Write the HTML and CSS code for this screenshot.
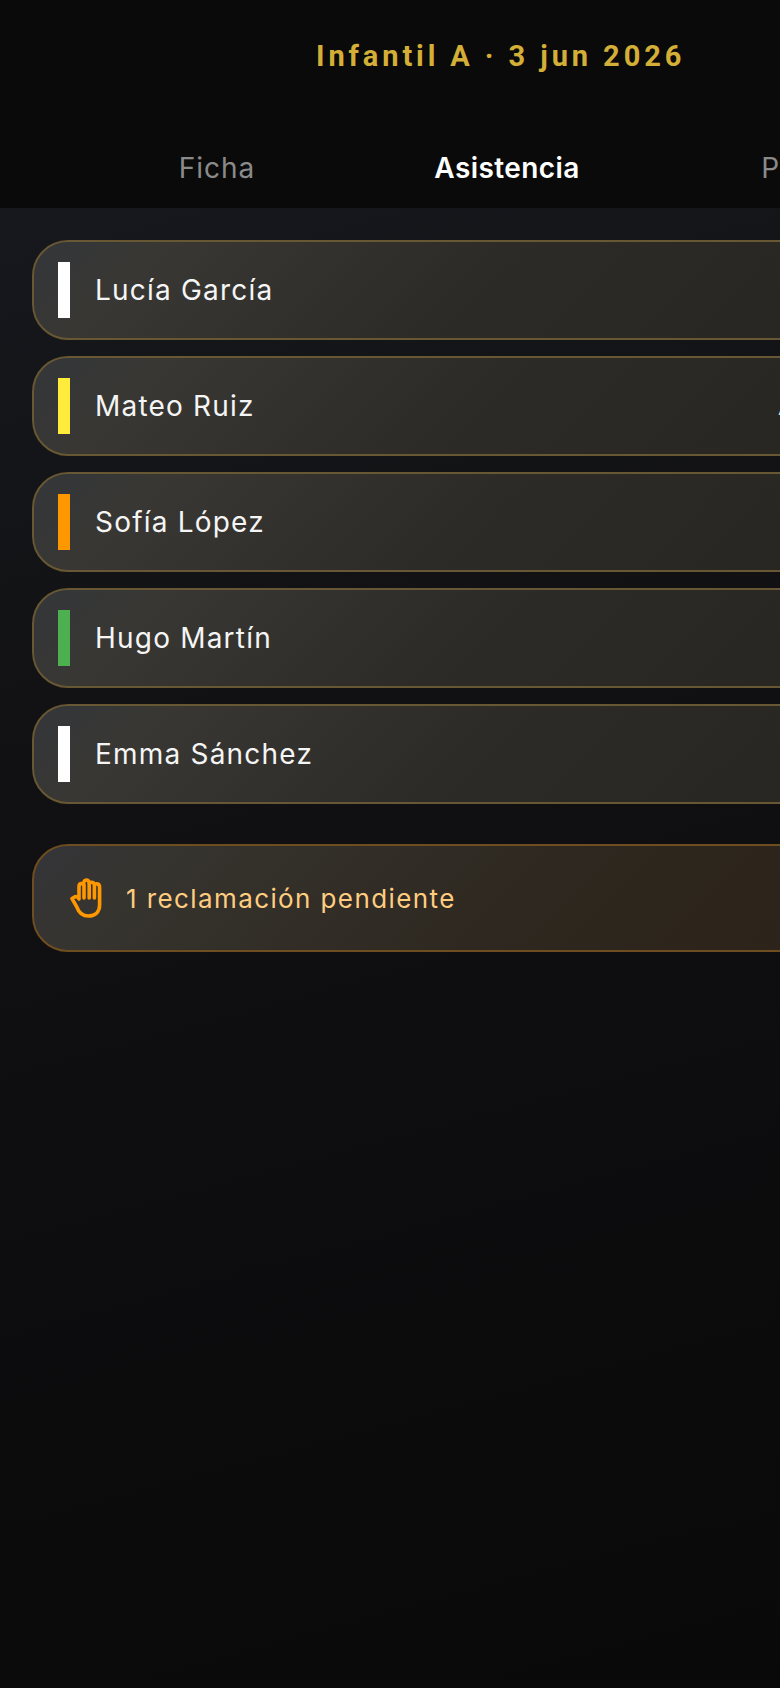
FILE: index.html

```html
<!DOCTYPE html>
<html lang="es">
<head>
  <meta charset="UTF-8" />
  <meta name="viewport" content="width=device-width, initial-scale=1.0" />
  <title>Asistencia</title>
  <link rel="stylesheet" href="styles.css">
</head>
<body>
  <header class="topbar">
    <h1 class="match-title">Infantil A · 3 jun 2026</h1>
    <nav class="tabs">
      <span class="tab">Ficha</span>
      <span class="tab tab-active">Asistencia</span>
      <span class="tab">Pago</span>
    </nav>
  </header>

  <main class="content">
    <div class="player-card">
      <span class="player-mark mark-white"></span>
      <span class="player-name">Lucía García</span>
    </div>
    <div class="player-card">
      <span class="player-mark mark-yellow"></span>
      <span class="player-name">Mateo Ruiz</span>
      <span class="player-note">Ausente</span>
    </div>
    <div class="player-card">
      <span class="player-mark mark-orange"></span>
      <span class="player-name">Sofía López</span>
    </div>
    <div class="player-card">
      <span class="player-mark mark-green"></span>
      <span class="player-name">Hugo Martín</span>
    </div>
    <div class="player-card">
      <span class="player-mark mark-white"></span>
      <span class="player-name">Emma Sánchez</span>
    </div>

    <div class="claim-card">
      <svg class="claim-icon" viewBox="0 0 32 40" fill="none" stroke="#ff9800" stroke-width="3.6" stroke-linecap="round" stroke-linejoin="round">
        <path d="M2 20.5 L4.5 19 C6.5 18.2 8 19.2 9 21 V8.5 C9 6.7 10 5.6 11.4 5.6 C12.2 5.6 13 6 13.4 6.8 C13.6 3.4 14.6 2 16.4 2 C18 2 19 3.2 19.4 5.6 C19.9 4.6 20.7 4.2 21.6 4.2 C22.9 4.2 23.9 5 24.4 6.4 C24.9 6 25.6 5.8 26.3 5.8 C28.3 5.8 29.6 7.2 29.6 9.4 V27 C29.6 34 25 38 18.4 38 C12 38 8.6 34 7 29.4 Z" />
        <path d="M14 7 V20 M19.2 6 V20 M24.4 7 V20" />
      </svg>
      <span class="claim-text">1 reclamación pendiente</span>
    </div>
  </main>
</body>
</html>
```

FILE: styles.css

```css
html, body {
  margin: 0;
  height: 100%;
  overflow: hidden;
}
body {
  font-family: "Inter", "Open Sans", sans-serif;
  background-color: #0a0a0a;
  width: 780px;
  min-height: 1688px;
}
.topbar {
  background-color: #0a0a0a;
  height: 208px;
  overflow: hidden;
}
.match-title {
  margin: 0;
  padding-top: 39px;
  padding-left: 316px;
  font-family: "Roboto", sans-serif;
  font-size: 29px;
  line-height: 34px;
  font-weight: 700;
  letter-spacing: 3.9px;
  color: #d4af37;
  white-space: nowrap;
}
.tabs {
  display: flex;
  margin-top: 77px;
  width: 870px;
  margin-left: 72px;
}
.tab {
  flex: 0 0 290px;
  text-align: center;
  font-size: 28px;
  line-height: 36px;
  letter-spacing: 1px;
  color: #8a8a8a;
  white-space: nowrap;
}
.tab-active {
  color: #fff;
  font-weight: 600;
  letter-spacing: 0.4px;
}
.content {
  display: flex;
  flex-direction: column;
  gap: 16px;
  padding: 32px 0 0 32px;
  height: 1480px;
  box-sizing: border-box;
  background: linear-gradient(165deg, #16181d 0%, #121214 30%, #0e0e10 55%, #090909 100%);
}
.player-card, .claim-card {
  display: flex;
  align-items: center;
  width: 860px;
  box-sizing: border-box;
  border-radius: 36px;
  border: 2px solid #675733;
}
.player-card {
  height: 100px;
  padding-left: 24px;
  background: linear-gradient(135deg, #34363a 0%, #383733 14%, #2c2b27 50%, #262520 100%);
}
.player-mark {
  width: 12px;
  height: 56px;
  margin-right: 25px;
}
.mark-white { background-color: #fff; }
.mark-yellow { background-color: #ffeb3b; }
.mark-orange { background-color: #ff9800; }
.mark-green { background-color: #4caf50; }
.player-name {
  font-size: 28px;
  letter-spacing: 1.2px;
  color: #f5f5f5;
  width: 683px;
  flex: none;
}
.player-note {
  font-size: 24px;
  color: #ddd;
}
.claim-card {
  height: 108px;
  margin-top: 24px;
  padding-left: 36px;
  border-color: #6e4d20;
  background: linear-gradient(135deg, #34353a 0%, #36342f 14%, #2e2820 55%, #2c2218 100%);
}
.claim-icon {
  width: 32px;
  height: 40px;
  margin-right: 24px;
}
.claim-text {
  font-size: 26px;
  letter-spacing: 1.4px;
  color: #ffcc80;
}
```
